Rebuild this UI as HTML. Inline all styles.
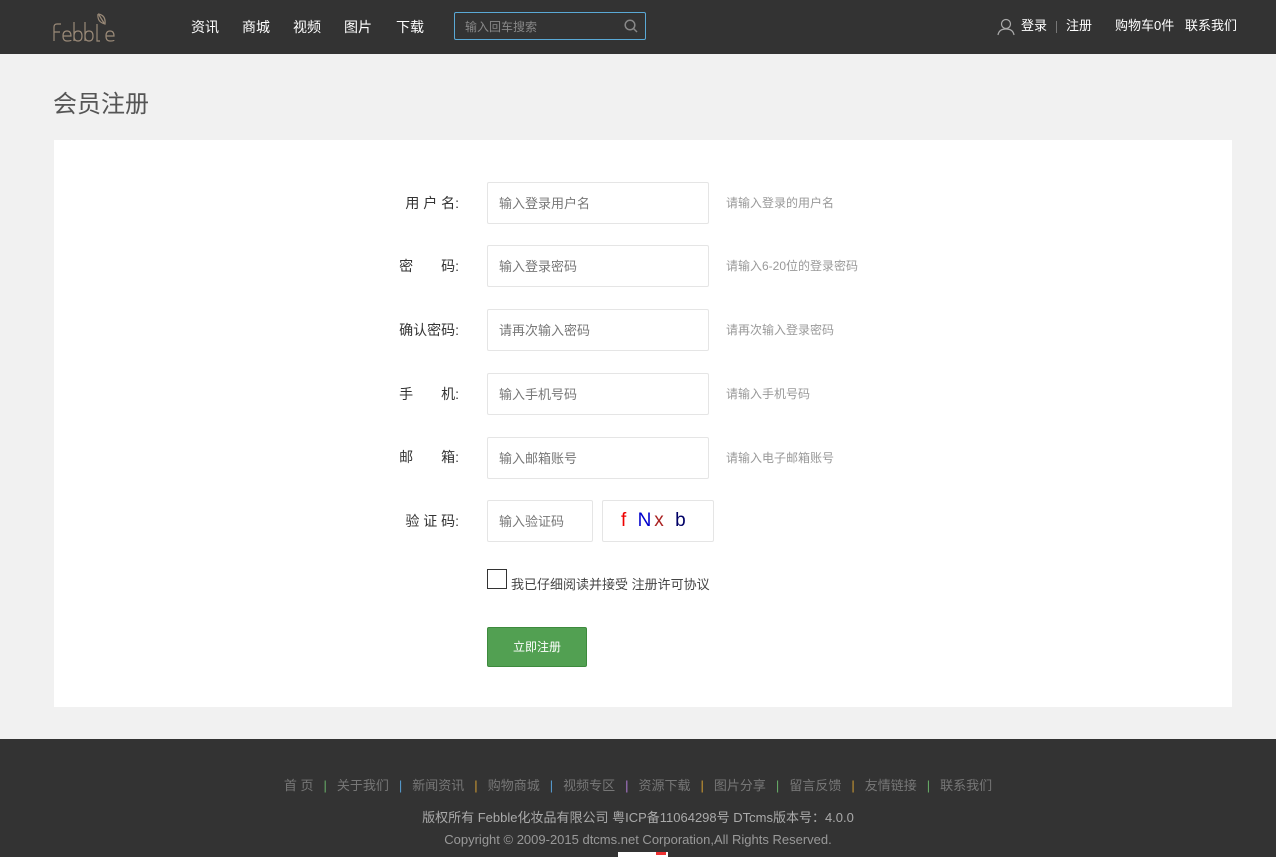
<!DOCTYPE html>
<html><head><meta charset="utf-8"><style>
*{margin:0;padding:0;box-sizing:border-box}
body{width:1276px;height:857px;overflow:hidden;background:#f1f1f1;font-family:"Liberation Sans","Noto Sans CJK SC",sans-serif;position:relative}
.hd{position:absolute;left:0;top:0;width:1276px;height:54px;background:#333}
.a{position:absolute;color:#fff;font-size:14px;line-height:16px;white-space:nowrap}
.srch{position:absolute;left:454px;top:12px;width:192px;height:28px;border:1px solid #5aa9d6;border-radius:2px}
.srch span{position:absolute;left:10px;top:5px;font-size:12px;color:#888}
h1{position:absolute;left:53px;top:84px;font-size:24px;font-weight:normal;color:#555}
.box{position:absolute;left:54px;top:140px;width:1178px;height:567px;background:#fff}
.lb{position:absolute;width:80px;text-align:right;left:379px;font-size:14px;color:#333;white-space:pre}
.in{position:absolute;left:487px;width:222px;height:42px;border:1px solid #e5e5e5;border-radius:2px}
.in span{position:absolute;left:11px;top:10px;font-size:13px;color:#777}
.ht{position:absolute;left:726px;font-size:12px;color:#999}
.ft{position:absolute;left:0;top:739px;width:1276px;height:118px;background:#333}
.fl{position:absolute;top:775px;width:1276px;text-align:center;font-size:13px;color:#777}
.fl i{font-style:normal;margin:0 10px}
</style></head><body>
<div class="hd">
<svg style="position:absolute;left:52px;top:12px" width="72" height="30" viewBox="0 0 72 30"><g fill="none" stroke="#9a8a78" stroke-width="1.2"><path d="M9 12h-4q-3 0 -3 3v14M2 20h6"/><path d="M11 24h8q0-5-4-5t-4 5 4 5 4-1"/><path d="M22 10v19M22 24q0-5 4-5t4 5-4 5-4-5"/><path d="M33 10v19M33 24q0-5 4-5t4 5-4 5-4-5"/><path d="M45 12v17q0 0 3-0"/><path d="M54 24h8q0-5-4-5t-4 5 4 5 4-1"/><path d="M46 2q8 1 7 10q-8-2-7-10M47 3l5 8"/></g></svg>
<div class="a" style="left:191px;top:19px">资讯</div>
<div class="a" style="left:242px;top:19px">商城</div>
<div class="a" style="left:293px;top:19px">视频</div>
<div class="a" style="left:344px;top:19px">图片</div>
<div class="a" style="left:396px;top:19px">下载</div>
<div class="srch"><span>输入回车搜索</span>
<svg style="position:absolute;right:7px;top:6px" width="14" height="14" viewBox="0 0 14 14"><circle cx="6" cy="6" r="4.8" fill="none" stroke="#888" stroke-width="1.5"/><path d="M9.5 9.5L13 13" stroke="#888" stroke-width="1.5"/></svg></div>
<svg style="position:absolute;left:997px;top:18px" width="18" height="18" viewBox="0 0 18 18"><circle cx="9" cy="6" r="4.5" fill="none" stroke="#aaa" stroke-width="1.2"/><path d="M1 17q1-6 8-6t8 6" fill="none" stroke="#aaa" stroke-width="1.2"/></svg>
<div class="a" style="left:1021px;top:18px;font-size:13px">登录</div>
<div style="position:absolute;left:1056px;top:21px;width:1px;height:12px;background:#777"></div>
<div class="a" style="left:1066px;top:18px;font-size:13px">注册</div>
<div class="a" style="left:1115px;top:18px;font-size:13px">购物车0件</div>
<div class="a" style="left:1185px;top:18px;font-size:13px">联系我们</div>
</div>
<h1>会员注册</h1>
<div class="box"></div>
<div class="lb" style="top:193px">用 户 名:</div>
<div class="in" style="top:182px"><span>输入登录用户名</span></div><div class="ht" style="top:194px">请输入登录的用户名</div>
<div class="lb" style="top:256px">密　　码:</div>
<div class="in" style="top:245px"><span>输入登录密码</span></div><div class="ht" style="top:257px">请输入6-20位的登录密码</div>
<div class="lb" style="top:320px">确认密码:</div>
<div class="in" style="top:309px"><span>请再次输入密码</span></div><div class="ht" style="top:321px">请再次输入登录密码</div>
<div class="lb" style="top:384px">手　　机:</div>
<div class="in" style="top:373px"><span>输入手机号码</span></div><div class="ht" style="top:385px">请输入手机号码</div>
<div class="lb" style="top:447px">邮　　箱:</div>
<div class="in" style="top:437px"><span>输入邮箱账号</span></div><div class="ht" style="top:449px">请输入电子邮箱账号</div>
<div class="lb" style="top:511px">验 证 码:</div>
<div class="in" style="top:500px;width:106px"><span>输入验证码</span></div>
<div class="in" style="top:500px;left:602px;width:112px"><span style="left:18px;top:9px;font-size:19px;letter-spacing:3px;font-family:'Liberation Sans',sans-serif"><b style="color:#e00;font-weight:normal">f</b> <b style="color:#00c;font-weight:normal">N</b><b style="color:#a22;font-weight:normal">x</b> <b style="color:#006;font-weight:normal">b</b></span></div>
<div style="position:absolute;left:487px;top:569px;width:20px;height:20px;border:1px solid #333"></div>
<div style="position:absolute;left:511px;top:574px;font-size:13px;color:#444">我已仔细阅读并接受 注册许可协议</div>
<div style="position:absolute;left:487px;top:627px;width:100px;height:40px;background:#52a052;border:1px solid #3d8a3d;border-radius:2px;color:#fff;font-size:12px;text-align:center;line-height:38px">立即注册</div>
<div class="ft"></div>
<div class="fl">首 页<i style="color:#6a6">|</i>关于我们<i style="color:#59c">|</i>新闻资讯<i style="color:#c93">|</i>购物商城<i style="color:#59c">|</i>视频专区<i style="color:#a7c">|</i>资源下载<i style="color:#c93">|</i>图片分享<i style="color:#6a6">|</i>留言反馈<i style="color:#c93">|</i>友情链接<i style="color:#6a6">|</i>联系我们</div>
<div class="fl" style="top:807px;color:#aaa;font-size:13px">版权所有 Febble化妆品有限公司 粤ICP备11064298号 DTcms版本号：4.0.0</div>
<div class="fl" style="top:832px;color:#999;font-size:13px">Copyright © 2009-2015 dtcms.net Corporation,All Rights Reserved.</div>
<div style="position:absolute;left:618px;top:852px;width:50px;height:5px;background:#fff"></div>
<div style="position:absolute;left:656px;top:852px;width:10px;height:3px;background:#e33"></div>
</body></html>
